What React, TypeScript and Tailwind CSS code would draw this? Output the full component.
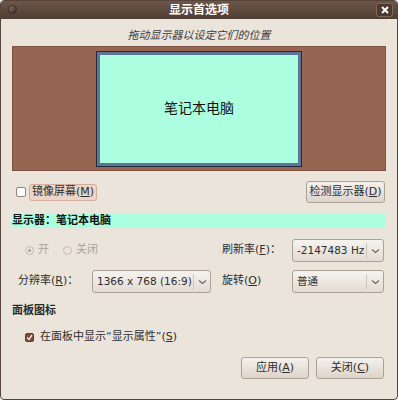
import React from 'react';

const font = "font-['DejaVu_Sans','Noto_Sans_CJK_SC',sans-serif]";

function Chevron() {
  return (
    <svg width="9" height="6" viewBox="0 0 9 6" className="text-[#6e665e]">
      <path d="M1 1.5 L4.5 4.5 L8 1.5" fill="none" stroke="currentColor" strokeWidth="1.2" />
    </svg>
  );
}

function Combo({ value, width }: { value: string; width: string }) {
  return (
    <div
      className={`${width} h-[23px] flex items-center rounded-[3px] border border-[#aca195] bg-gradient-to-b from-[#f6f3ef] to-[#e2dbd2] text-[10.5px] text-[#2e2e2e]`}
    >
      <span className="flex-1 pl-[4px] whitespace-nowrap overflow-hidden">{value}</span>
      <div className="w-px h-[15px] bg-[#cbc2b8]" />
      <div className="w-[16px] flex justify-center">
        <Chevron />
      </div>
    </div>
  );
}

function Button({ children, width }: { children: React.ReactNode; width: string }) {
  return (
    <div
      className={`${width} h-[22px] flex items-center justify-center rounded-[3px] border border-[#aca195] bg-gradient-to-b from-[#f4f0eb] to-[#ddd5cb] text-[11px] text-[#2e2e2e]`}
    >
      {children}
    </div>
  );
}

export default function App() {
  return (
    <div
      className={`${font} w-[398px] h-[400px] flex flex-col overflow-hidden rounded-[4px] border border-[#56443a] bg-[#ebe4da]`}
    >
      {/* title bar */}
      <div className="relative h-[18px] shrink-0 flex items-center justify-center bg-gradient-to-b from-[#6c5648] to-[#4f3e34]">
        <div className="absolute left-[7px] top-[4px] w-[9px] h-[9px] rounded-full bg-gradient-to-br from-[#8c7a6e] to-[#3a2c24] border border-[#3a2c24]" />
        <span className="text-[12px] font-bold text-white leading-none">显示首选项</span>
        <div className="absolute right-[4px] top-[2px] w-[17px] h-[14px] rounded-[3px] border border-[#7d685a] bg-[#4b3a30] flex items-center justify-center">
          <svg width="8" height="8" viewBox="0 0 8 8">
            <path d="M1 1 L7 7 M7 1 L1 7" stroke="white" strokeWidth="2" />
          </svg>
        </div>
      </div>

      <div className="flex-1 flex flex-col px-[11px]">
        <p className="mt-[10px] text-center italic text-[11px] leading-[14px] text-[#3a3a3a]">
          拖动显示器以设定它们的位置
        </p>

        {/* preview */}
        <div className="mt-[3px] h-[125px] flex items-center justify-center border border-[#7b5142] bg-[#976552]">
          <div className="w-[206px] h-[116px] border border-[#232a3a] bg-[#abffe0] shadow-[inset_0_0_0_3px_#5e7696] flex items-center justify-center">
            <span className="text-[14px] text-[#111]">笔记本电脑</span>
          </div>
        </div>

        {/* mirror row */}
        <div className="mt-[10px] h-[22px] flex items-center justify-between">
          <div className="flex items-center">
            <div className="ml-[4px] w-[10px] h-[10px] rounded-[2px] border border-[#8f867c] bg-white" />
            <div className="ml-[3px] h-[17px] px-[2px] flex items-center rounded-[3px] border border-[#d4ae9a] bg-[#ead5c8] text-[11px] text-[#2e2e2e]">
              镜像屏幕(<u>M</u>)
            </div>
          </div>
          <div className="mr-[1px]">
            <Button width="w-[79px]">
              检测显示器(<u>D</u>)
            </Button>
          </div>
        </div>

        {/* monitor name */}
        <div className="mt-[11px] h-[14px] bg-[#abffe0] text-[11px] leading-[14px] font-bold text-[#111]">
          显示器：笔记本电脑
        </div>

        {/* row 1 */}
        <div className="mt-[11px] h-[23px] flex items-center">
          <div className="w-[210px] flex items-center pl-[13px] text-[11px] text-[#aaa39a]">
            <div className="w-[9px] h-[9px] rounded-full border border-[#c2bbb2] flex items-center justify-center">
              <div className="w-[3px] h-[3px] rounded-full bg-[#aaa39a]" />
            </div>
            <span className="ml-[4px]">开</span>
            <div className="ml-[14px] w-[9px] h-[9px] rounded-full border border-[#c2bbb2]" />
            <span className="ml-[4px]">关闭</span>
          </div>
          <div className="w-[70px] text-[11px] text-[#2e2e2e] whitespace-nowrap">
            刷新率(<u>F</u>)：
          </div>
          <Combo value="-2147483 Hz" width="w-[92px]" />
        </div>

        {/* row 2 */}
        <div className="mt-[8px] h-[23px] flex items-center">
          <div className="w-[80px] pl-[6px] text-[11px] text-[#2e2e2e] whitespace-nowrap">
            分辨率(<u>R</u>)：
          </div>
          <Combo value="1366 x 768 (16:9)" width="w-[119px]" />
          <div className="w-[11px]" />
          <div className="w-[70px] text-[11px] text-[#2e2e2e] whitespace-nowrap">
            旋转(<u>O</u>)
          </div>
          <Combo value="普通" width="w-[92px]" />
        </div>

        <div className="mt-[11px] text-[11px] leading-[14px] font-bold text-[#2a2a2a]">面板图标</div>

        <div className="mt-[12px] h-[14px] flex items-center pl-[13px]">
          <div className="w-[9px] h-[9px] rounded-[2px] bg-[#7c4c37] border border-[#5f3828] flex items-center justify-center">
            <svg width="7" height="7" viewBox="0 0 7 7">
              <path d="M1 3.5 L3 5.5 L6 1" fill="none" stroke="#f3e6de" strokeWidth="1.4" />
            </svg>
          </div>
          <span className="ml-[6px] text-[11px] text-[#2e2e2e]">
            在面板中显示“显示属性”(<u>S</u>)
          </span>
        </div>

        <div className="mt-[13px] flex justify-end gap-[7px] mr-[2px]">
          <Button width="w-[68px]">
            应用(<u>A</u>)
          </Button>
          <Button width="w-[68px]">
            关闭(<u>C</u>)
          </Button>
        </div>
      </div>
    </div>
  );
}
